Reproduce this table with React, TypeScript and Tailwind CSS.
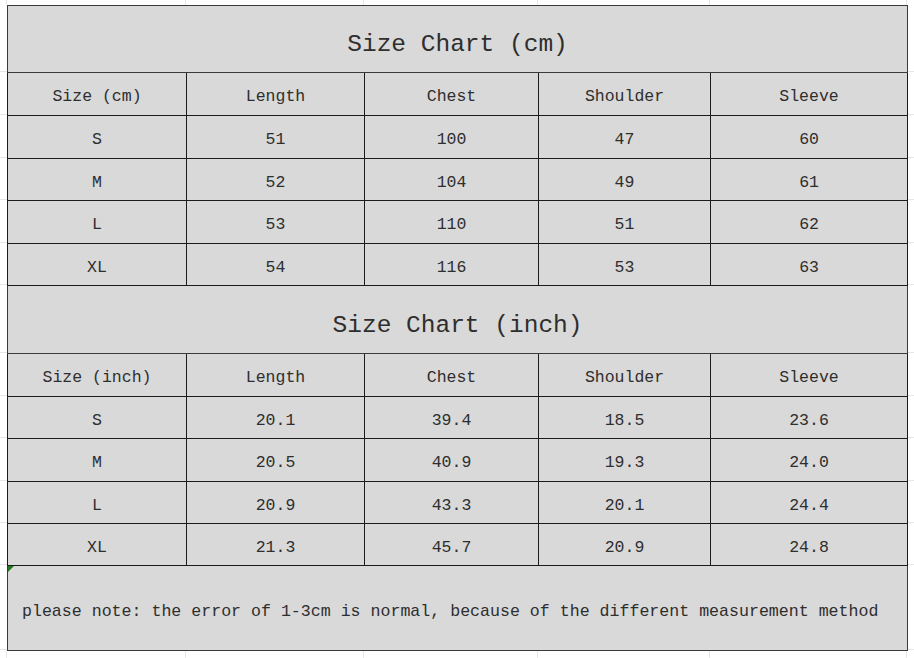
import React from "react";

const colW = ["w-[179px]", "w-[178px]", "w-[174px]", "w-[172px]", "w-[197px]"];
const rowH = [
  "h-[67px]",
  "h-[43px]",
  "h-[43px]",
  "h-[42px]",
  "h-[43px]",
  "h-[42px]",
  "h-[68px]",
  "h-[43px]",
  "h-[42px]",
  "h-[43px]",
  "h-[42px]",
  "h-[42px]",
  "h-[85px]",
];

const cmRows = [
  ["S", "51", "100", "47", "60"],
  ["M", "52", "104", "49", "61"],
  ["L", "53", "110", "51", "62"],
  ["XL", "54", "116", "53", "63"],
];
const inRows = [
  ["S", "20.1", "39.4", "18.5", "23.6"],
  ["M", "20.5", "40.9", "19.3", "24.0"],
  ["L", "20.9", "43.3", "20.1", "24.4"],
  ["XL", "21.3", "45.7", "20.9", "24.8"],
];

const mono = "font-['Liberation_Mono','DejaVu_Sans_Mono',monospace]";

function Row({ cells, h }: { cells: string[]; h: string }) {
  return (
    <tr className={h}>
      {cells.map((c, i) => (
        <td
          key={i}
          className="border border-[#1c1c1c] bg-[#d9d9d9] text-center align-middle pt-[7px] text-[16.5px] leading-none text-[#2e2e2e]"
        >
          {c}
        </td>
      ))}
    </tr>
  );
}

function Title({ text, h }: { text: string; h: string }) {
  return (
    <tr className={h}>
      <td
        colSpan={5}
        className="border border-[#3a3a3a] bg-[#d9d9d9] text-center align-middle pt-[13px] text-[24.5px] leading-none text-[#2e2e2e]"
      >
        {text}
      </td>
    </tr>
  );
}

function GridStrip({ h }: { h: string }) {
  return (
    <div className={`flex ${h}`}>
      <div className="w-[7px] border-r border-[#e6e6e6]" />
      {colW.map((w, i) => (
        <div key={i} className={`${w} border-r border-[#e6e6e6]`} />
      ))}
    </div>
  );
}

function SideStrip({ className }: { className: string }) {
  return (
    <div className={`${className} flex flex-col`}>
      {rowH.map((h, i) => (
        <div key={i} className={`${h} border-b border-[#e6e6e6]`} />
      ))}
    </div>
  );
}

export default function App() {
  return (
    <div className={`w-[914px] h-[658px] bg-white overflow-hidden ${mono}`}>
      <GridStrip h="h-[5px]" />
      <div className="flex">
        <SideStrip className="w-[7px]" />
        <table className="border-collapse table-fixed w-[900px] border border-[#4a4a4a]">
          <colgroup>
            {colW.map((w, i) => (
              <col key={i} className={w} />
            ))}
          </colgroup>
          <tbody>
            <Title text="Size Chart (cm)" h={rowH[0]} />
            <Row cells={["Size (cm)", "Length", "Chest", "Shoulder", "Sleeve"]} h={rowH[1]} />
            {cmRows.map((r, i) => (
              <Row key={i} cells={r} h={rowH[2 + i]} />
            ))}
            <Title text="Size Chart (inch)" h={rowH[6]} />
            <Row cells={["Size (inch)", "Length", "Chest", "Shoulder", "Sleeve"]} h={rowH[7]} />
            {inRows.map((r, i) => (
              <Row key={i} cells={r} h={rowH[8 + i]} />
            ))}
            <tr className={rowH[12]}>
              <td
                colSpan={5}
                className="relative border border-[#3a3a3a] bg-[#d9d9d9] text-left align-middle pl-[14px] pt-[8px] text-[16.6px] leading-none text-[#2e2e2e] whitespace-nowrap"
              >
                please note: the error of 1-3cm is normal, because of the different measurement method
                <span className="absolute left-0 top-0 w-0 h-0 border-t-[6px] border-t-[#1e7a1e] border-r-[6px] border-r-transparent" />
              </td>
            </tr>
          </tbody>
        </table>
        <SideStrip className="flex-1" />
      </div>
      <GridStrip h="h-[20px]" />
    </div>
  );
}
